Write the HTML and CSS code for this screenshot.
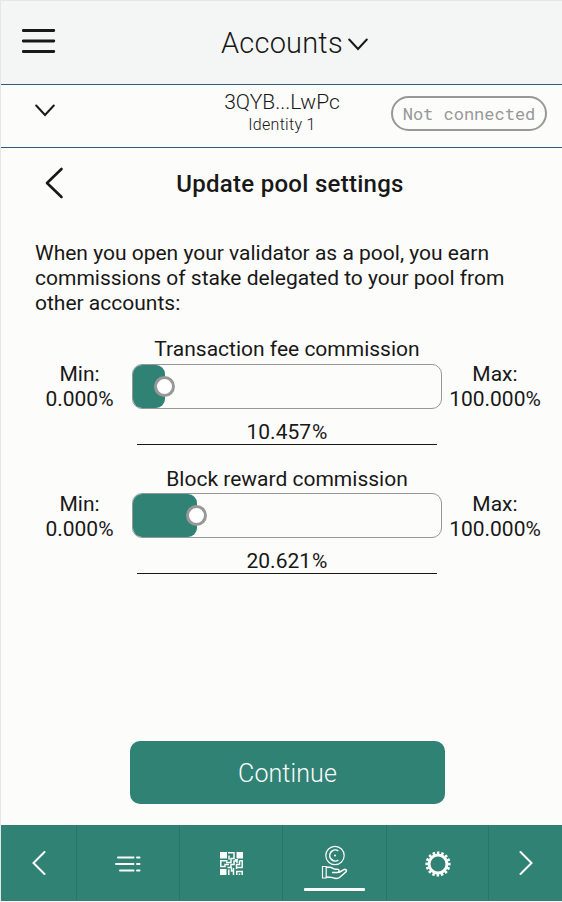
FILE: index.html
```html
<!DOCTYPE html>
<html lang="en">
<head>
<meta charset="utf-8">
<title>Update pool settings</title>
<link rel="stylesheet" href="styles.css">
</head>
<body>
<div class="app">
  <header class="header">
    <svg class="menu" width="34" height="26" viewBox="0 0 34 26"><path d="M1.2 2.5H31.8M1.2 13H31.8M1.2 23.5H31.8"/></svg>
    <h1 class="header-title">Accounts</h1>
    <svg class="chevron" width="20" height="13" viewBox="0 0 20 13"><path d="M1.200 1.500L10 11L18.800 1.500"/></svg>
  </header>
  <section class="account">
    <svg class="chevron account-chevron" width="20" height="13" viewBox="0 0 20 13"><path d="M1.200 1.500L10 11L18.800 1.500"/></svg>
    <div class="account-info">
      <div class="account-name">3QYB...LwPc</div>
      <div class="account-identity">Identity 1</div>
    </div>
    <span class="status">Not connected</span>
  </section>
  <main class="main">
    <div class="title-row">
      <svg class="back" width="20" height="32" viewBox="0 0 20 32"><path d="M17.500 2L3 16L17.500 30"/></svg>
      <h2 class="title">Update pool settings</h2>
    </div>
    <p class="description">When you open your validator as a pool, you earn commissions of stake delegated to your pool from other accounts:</p>
    <section class="commission">
      <div class="limit">Min:<br>0.000%</div>
      <div class="control">
        <div class="label">Transaction fee commission</div>
        <div class="slider"><div class="fill" style="width:10.457%"></div><i class="thumb" style="left:10.457%"></i></div>
        <div class="value">10.457<span class="percent">%</span></div>
      </div>
      <div class="limit limit-max">Max:<br>100.000%</div>
    </section>
    <section class="commission commission-block">
      <div class="limit">Min:<br>0.000%</div>
      <div class="control">
        <div class="label">Block reward commission</div>
        <div class="slider"><div class="fill" style="width:20.621%"></div><i class="thumb" style="left:20.621%"></i></div>
        <div class="value">20.621<span class="percent">%</span></div>
      </div>
      <div class="limit limit-max">Max:<br>100.000%</div>
    </section>
    <button class="continue">Continue</button>
  </main>
  <nav class="nav">
    <a class="tab"><svg width="14" height="24" viewBox="0 0 14 24"><path class="arrow" d="M12.500 1L1.500 12L12.500 23"/></svg></a>
    <a class="tab"><svg class="list-icon" width="27" height="18" viewBox="0 0 27 18"><path class="list" d="M4 2.500H19.500M2 9H19.500M6 15.500H19.500M23 2.500H25.500M23 9H25.500M23 15.500H25.500"/></svg></a>
    <a class="tab"><svg width="23" height="23" viewBox="0 0 23 23">
      <path fill="#fcfcfa" d="M0 0h7v6.500H0zM16.500 0H23v6.500H16.500zM0 17h6.500v6H0z"/>
      <path class="maze" d="M8 .8H14V6.500H11V10.500H6M9 3.500V7H8.500M0 8.800H7.500M.8 8.800V14.500H5V12.500H9M7.500 15.500H11V12.500H14V9H17V11M15 7.800H18M19.500 8.800H22.200V15.500H16.500M19.500 8.800V12.500H16.500V17M8.800 17.500V23M11.500 15.500V19H14M13.500 16V23M16.800 23V19.500H22.200V23M19.500 21.500V23"/>
    </svg></a>
    <a class="tab tab-active"><svg class="earn" width="27" height="36" viewBox="0 0 27 36">
      <circle cx="14" cy="10.500" r="9.200"/><path class="euro" d="M17.300 5.900A5.500 5.500 0 1 0 17.300 15.100"/><circle class="dot" cx="14" cy="10.500" r="1"/>
      <path d="M1.500 21.500H5.200V33H1.500Z"/><path class="hand" d="M5.200 22.200H9C11 22.200 12 24.200 14 24.200H16.500C18.500 24.200 18.500 27.500 16.500 27.500H11M17.800 27.500L22.500 24.800C24.500 23.600 26.500 25.500 24.800 27L18.500 32.500C17 33.700 14 33.500 11.500 32.600C9 31.900 8 31.900 5.200 31.900"/>
    </svg></a>
    <a class="tab"><svg class="gear" width="26" height="26" viewBox="-13 -13 26 26"><circle class="gear-ring" r="9"/><circle class="gear-teeth" r="11.200" pathLength="32"/></svg></a>
    <a class="tab"><svg width="14" height="24" viewBox="0 0 14 24"><path class="arrow" d="M1.500 1L12.500 12L1.500 23"/></svg></a>
  </nav>
</div>
</body>
</html>
```
FILE: styles.css
```css
* { box-sizing: border-box; }
body { margin: 0; font-family: Roboto, sans-serif; color: #181818; background: #fcfcfa; }
svg { display: block; fill: none; }
.app {
  width: 562px; height: 902px; display: flex; flex-direction: column;
  border: solid #e6e6e6; border-width: 1px 0 1px 1px; border-bottom-color: #fcfcfa;
}
.header {
  height: 84px; flex: none; display: grid; grid-template-columns: 200px auto auto 1fr;
  align-items: center; padding-left: 20px; background: #f4f6f5; border-bottom: 1px solid #305d78;
}
.menu { stroke: #181818; stroke-width: 2.8; stroke-linecap: round; margin: -3px 0 0 1px; }
.header-title { margin: 1px 0 0; font-weight: 300; font-size: 29px; line-height: 34px; letter-spacing: .2px; }
.chevron { stroke: #181818; stroke-width: 2; stroke-linecap: round; margin: 4px 0 0 5px; }
.account {
  height: 63px; flex: none; display: grid; grid-template-columns: 180px 202px 1fr;
  border-bottom: 1px solid #305d78;
}
.account-chevron { margin: 19px 0 0 34px; }
.account-info { text-align: center; font-weight: 300; padding-top: 5px; }
.account-name { font-size: 21px; line-height: 24px; }
.account-identity { font-size: 16px; line-height: 22px; letter-spacing: .3px; }
.status {
  width: 156px; height: 35px; margin: 11px 0 0 8px; border: 2px solid #989898; border-radius: 18px;
  color: #989898; font: 17px/32px "Roboto Mono", "Liberation Mono", monospace; text-align: center; white-space: nowrap;
}
.main { flex: 1; min-height: 0; display: flex; flex-direction: column; }
.title-row { display: grid; grid-template-columns: 90px 398px; align-items: center; height: 70px; }
.back { stroke: #181818; stroke-width: 2.600; stroke-linecap: round; stroke-linejoin: round; margin-left: 43px; }
.title { margin: 2px 0 0; font-weight: 500; font-size: 24px; line-height: 30px; text-align: center; letter-spacing: .28px; }
.description { margin: 23px 34px 0; width: 480px; font-size: 21px; line-height: 25px; }
.commission {
  display: grid; grid-template-columns: 105px 310px 106px; margin: 21px 0 0 26px;
  font-size: 21px; line-height: 25px; text-align: center;
}
.commission-block { margin-top: 22px; }
.limit { padding-top: 25px; }
.slider { position: relative; height: 45px; margin-top: 2px; border: 1px solid #989898; border-radius: 10px; }
.label { height: 25px; }
.fill { height: 43px; background: #308274; border-radius: 9px; }
.thumb {
  position: absolute; top: 11px; width: 21px; height: 21px; margin-left: -11px;
  background: #fff; border: 3px solid #989898; border-radius: 50%;
}
.value { height: 36px; margin: 0 5px; border-bottom: 1px solid #181818; padding-top: 11px; }
.commission-block .slider { margin-top: 1px; }
.percent { margin-left: 1px; }
.continue {
  width: 315px; height: 63px; margin: auto 0 21px 129px; border: 0; border-radius: 10px; padding: 2px 0 0;
  background: #308274; color: #fcfcfa; font: 300 25px Roboto, sans-serif; letter-spacing: .1px;
}
.nav {
  height: 76px; flex: none; display: grid; grid-template-columns: 76px 103px 103px 104px 102px 1fr;
  background: #308274;
}
.tab { display: flex; align-items: center; justify-content: center; border-right: 1px solid #2b7568; }
.tab:last-child { border: 0; }
.arrow, .list { stroke: #fcfcfa; stroke-width: 2; stroke-linecap: round; }
.list-icon { margin: 2px 2px 0 0; }
.maze { stroke: #fcfcfa; stroke-width: 1.500; }
.tab-active { flex-direction: column; justify-content: flex-start; padding-top: 20px; }
.tab-active::after { content: ""; width: 61px; height: 3px; margin-top: 7px; border-radius: 1px; background: #fcfcfa; }
.earn { stroke: #fcfcfa; stroke-width: 1.200; }
.earn .dot { fill: #fcfcfa; stroke: none; }
.earn .euro { stroke-width: 1.600; }
.earn .hand { stroke-width: 1.500; stroke-linejoin: round; }
.gear { margin: 1px 0 0 1px; }
.gear-ring { stroke: #fcfcfa; stroke-width: 3; }
.gear-teeth { stroke: #fcfcfa; stroke-width: 2.800; stroke-dasharray: 1.150 .85; stroke-dashoffset: .5; }
```
